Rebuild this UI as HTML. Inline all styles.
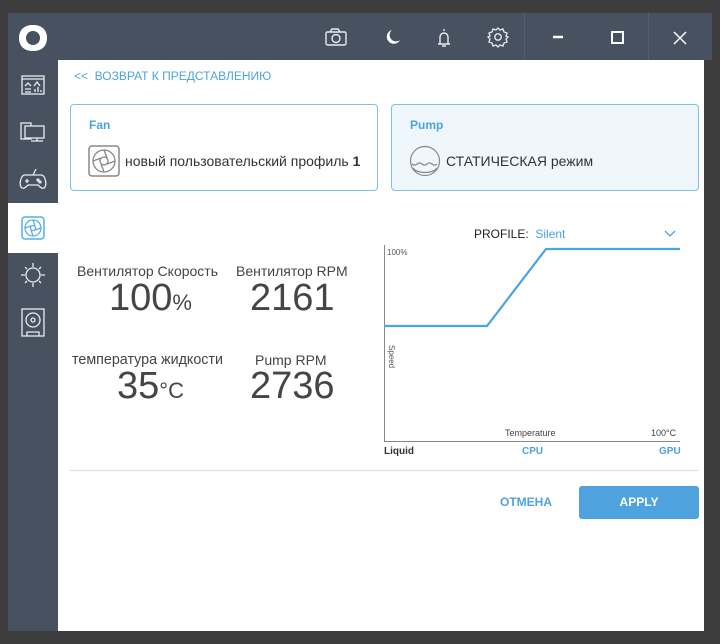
<!DOCTYPE html>
<html><head><meta charset="utf-8"><style>
*{margin:0;padding:0;box-sizing:border-box}
body{width:720px;height:644px;background:#3d3d3d;position:relative;font-family:"Liberation Sans",sans-serif;overflow:hidden}
.a{position:absolute}
#side{left:8px;top:13px;width:50px;height:618px;background:#47515f}
#top{left:58px;top:13px;width:654px;height:47px;background:#47515f}
#main{left:58px;top:60px;width:646px;height:571px;background:#fff}
.card{border:1px solid #7dc1ea;border-radius:4px}
.lbl{font-size:14px;color:#444;white-space:nowrap}
.big{font-size:38px;color:#454545;white-space:nowrap}
svg{z-index:2}
</style></head><body>
<div class="a" id="side"></div>
<div class="a" id="top"></div>
<div class="a" style="left:524px;top:13px;width:1px;height:47px;background:#55606e"></div>
<div class="a" style="left:648px;top:13px;width:1px;height:47px;background:#55606e"></div>
<div class="a" id="main"></div>
<div class="a" style="left:8px;top:203px;width:50px;height:50px;background:#fff"></div>
<div class="a card" style="left:70px;top:104px;width:308px;height:87px"></div>
<div class="a card" style="left:391px;top:104px;width:308px;height:87px;background:#f0f7fc"></div>
<svg class="a" style="left:0;top:0" width="720" height="644" fill="none" stroke="#e8ecf0" stroke-width="1.3">
 <path d="M33 25 C42 25 47 30 47 38 C47 46 42 51 33 51 C24 51 19 46 19 38 C19 30 24 25 33 25Z" fill="#fff" stroke="none"/>
 <circle cx="33" cy="38" r="7" fill="#47515f" stroke="none"/>
 <rect x="22" y="76" width="22" height="18"/><path d="M22 79h22M25 86l3-3 3 3M34 86l3-4 3 4M25 89h6M25 92h6M35 92v-3M38 92v-5M41 92v-2"/>
 <rect x="21" y="123" width="10" height="16"/><rect x="25" y="126" width="19" height="12" fill="#47515f"/><path d="M31 141h12M37 138v3"/>
 <path d="M25 175h16c4 0 6 8 4 12-2 3-5 0-7-2h-10c-2 2-5 5-7 2-2-4 0-12 4-12zM33 175l3-6M27 179v4M25 181h4"/><circle cx="38" cy="180" r="1"/><circle cx="40" cy="182" r="1"/>
 <rect x="22" y="217" width="22" height="22" rx="3" stroke="#5aaee6" stroke-width="1.5"/><circle cx="33" cy="228" r="8" stroke="#5aaee6"/><circle cx="33" cy="228" r="2.5" stroke="#5aaee6"/><path d="M33 220l2 6M41 228l-6 2M33 236l-2-6M25 228l6-2" stroke="#5aaee6"/>
 <circle cx="33" cy="275" r="7"/><path d="M33 263v4M33 283v4M21 275h4M41 275h4M25 267l2 2M39 281l2 2M41 267l-2 2M25 283l2-2"/>
 <rect x="22" y="309" width="22" height="27"/><circle cx="33" cy="320" r="7"/><circle cx="33" cy="320" r="2"/><path d="M27 336v-4h12v4"/>
 <rect x="326" y="32" width="20" height="13" rx="1.5" stroke-width="1.4"/><path d="M330 32l2-3h6l2 3" stroke-width="1.4"/><circle cx="336" cy="38.5" r="4" stroke-width="1.4"/>
 <path d="M392 30a7 7 0 1 0 8 10a6 6 0 0 1-8-10z" fill="#fff" stroke="none"/>
 <path d="M438 44h12M440 44v-7a4 4 0 0 1 8 0v7M442 46h4M444 29v2" stroke-width="1.4"/>
 <circle cx="498" cy="37" r="3.2" stroke-width="1.4"/><path d="M498 28l2 2 3-1 1 3 3 1-1 3 2 1-2 2 1 3-3 1-1 3-3-1-2 2-2-2-3 1-1-3-3-1 1-3-2-2 2-1-1-3 3-1 1-3 3 1z" stroke-width="1.3"/>
 <path d="M553 37h10" stroke="#fff" stroke-width="2.5"/>
 <rect x="612" y="32" width="11" height="11" stroke="#fff" stroke-width="2"/>
 <path d="M674 32l12 12M686 32l-12 12" stroke="#fff" stroke-width="1.5"/>
 <path d="M384.5 245v196.5H680" stroke="#888" stroke-width="1"/>
 <path d="M384 326h103l59-77h134" stroke="#4da3e0" stroke-width="2.2"/>
 <path d="M665 231l5 5 5-5" stroke="#4da3e0" stroke-width="1.3"/>
 <path d="M70 470.5h628" stroke="#ddd"/>
 <rect x="89" y="146" width="30" height="30" rx="3" stroke="#888" stroke-width="1.5"/><circle cx="104" cy="161" r="11" stroke="#888" stroke-width="1.3"/><circle cx="104" cy="161" r="4" stroke="#888"/><path d="M104 150l3 8M115 161l-8 3M104 172l-3-8M93 161l8-3" stroke="#888"/>
 <circle cx="425" cy="161" r="14.5" stroke="#888" stroke-width="1.2"/><path d="M412 164c2 1.5 3 1.5 5 0s3-1.5 5 0 3 1.5 5 0 3-1.5 5 0 3 1.5 5 0M413 168c4 6 20 6 24 0" stroke="#888"/>
</svg>
<div class="a" style="left:74px;top:69px;font-size:12px;color:#4da3e0">&lt;&lt;&nbsp; ВОЗВРАТ К ПРЕДСТАВЛЕНИЮ</div>
<div class="a" style="left:89px;top:118px;font-size:12px;font-weight:bold;color:#4da3e0">Fan</div>
<div class="a" style="left:410px;top:118px;font-size:12px;font-weight:bold;color:#4da3e0">Pump</div>
<div class="a" style="left:125px;top:153px;font-size:14px;color:#333">новый пользовательский профиль <b>1</b></div>
<div class="a" style="left:446px;top:153px;font-size:14px;color:#333">СТАТИЧЕСКАЯ режим</div>
<div class="a lbl" style="left:77px;top:263px">Вентилятор Скорость</div>
<div class="a lbl" style="left:236px;top:263px">Вентилятор RPM</div>
<div class="a lbl" style="left:72px;top:352px;font-size:14.3px">температура жидкости</div>
<div class="a lbl" style="left:255px;top:352px">Pump RPM</div>
<div class="a big" style="left:109px;top:277px">100<span style="font-size:22px">%</span></div>
<div class="a big" style="left:250px;top:277px">2161</div>
<div class="a big" style="left:117px;top:365px">35<span style="font-size:22px">°C</span></div>
<div class="a big" style="left:250px;top:365px">2736</div>
<div class="a" style="left:474px;top:227px;font-size:12px;color:#222">PROFILE:&nbsp; <span style="color:#4da3e0">Silent</span></div>
<div class="a" style="left:387px;top:248px;font-size:8px;color:#555">100%</div>
<div class="a" style="top:345px;font-size:8px;color:#555;transform:rotate(90deg);transform-origin:left top;left:396px">Speed</div>
<div class="a" style="left:505px;top:428px;font-size:9px;color:#444">Temperature</div>
<div class="a" style="left:651px;top:428px;font-size:9px;color:#444">100°C</div>
<div class="a" style="left:384px;top:446px;font-size:10px;font-weight:bold;color:#333">Liquid</div>
<div class="a" style="left:522px;top:446px;font-size:10px;font-weight:bold;color:#4da3e0">CPU</div>
<div class="a" style="left:659px;top:446px;font-size:10px;font-weight:bold;color:#4da3e0">GPU</div>
<div class="a" style="left:500px;top:495px;font-size:12px;font-weight:bold;color:#4da3e0">ОТМЕНА</div>
<div class="a" style="left:579px;top:486px;width:120px;height:33px;border-radius:3px;background:#4ea3df;color:#fff;font-size:12px;font-weight:bold;text-align:center;line-height:33px">APPLY</div>
</body></html>
